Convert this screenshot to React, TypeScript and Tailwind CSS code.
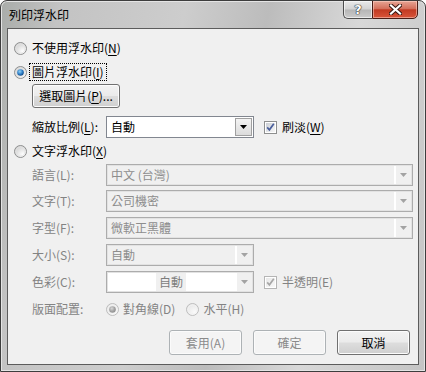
import React from "react";

function Radio({ checked = false, disabled = false }: { checked?: boolean; disabled?: boolean }) {
  const id = `r${checked ? 1 : 0}${disabled ? 1 : 0}`;
  return (
    <svg width="13" height="13" viewBox="0 0 13 13" className="shrink-0">
      <defs>
        <radialGradient id={`${id}f`} cx="0.7" cy="0.75" r="0.8">
          <stop offset="0" stopColor={disabled ? "#fbfbfb" : "#ffffff"} />
          <stop offset="1" stopColor={disabled ? "#e6e6e6" : "#cfcfcf"} />
        </radialGradient>
        <radialGradient id={`${id}d`} cx="0.4" cy="0.35" r="0.7">
          <stop offset="0" stopColor={disabled ? "#d8d8d8" : "#8fd0f6"} />
          <stop offset="0.6" stopColor={disabled ? "#a2a2a2" : "#2b7bc4"} />
          <stop offset="1" stopColor={disabled ? "#8c8c8c" : "#0c3f77"} />
        </radialGradient>
      </defs>
      <circle cx="6.5" cy="6.5" r="6" fill={`url(#${id}f)`} stroke={disabled ? "#bdbdbd" : "#8e8f8f"} />
      <circle cx="6.5" cy="6.5" r="4.6" fill="none" stroke={disabled ? "#f2f2f2" : "#e4e4e4"} strokeWidth="0.8" />
      {checked && <circle cx="6.5" cy="6.5" r="3.3" fill={`url(#${id}d)`} />}
    </svg>
  );
}

function Checkbox({ disabled = false }: { disabled?: boolean }) {
  const id = `c${disabled ? 1 : 0}`;
  return (
    <svg width="13" height="13" viewBox="0 0 13 13" className="shrink-0">
      <defs>
        <linearGradient id={id} x1="0" y1="0" x2="1" y2="1">
          <stop offset="0" stopColor={disabled ? "#e8e8e8" : "#cbcfd5"} />
          <stop offset="1" stopColor={disabled ? "#f8f8f8" : "#f7f7f7"} />
        </linearGradient>
      </defs>
      <rect x="0.5" y="0.5" width="12" height="12" fill="#ffffff" stroke={disabled ? "#b5b5b5" : "#8e8f8f"} />
      <rect x="2" y="2" width="9" height="9" fill={`url(#${id})`} />
      <path
        d="M3.2 6.4 L5.4 8.8 L9.8 2.8"
        fill="none"
        stroke={disabled ? "#a7a7a7" : "#4a5f9c"}
        strokeWidth="1.7"
      />
    </svg>
  );
}

function Arrow({ disabled = false }: { disabled?: boolean }) {
  return (
    <svg width="7" height="4" viewBox="0 0 7 4">
      <path d="M0 0 H7 L3.5 4 Z" fill={disabled ? "#a3a3a3" : "#000000"} />
    </svg>
  );
}

function U({ children }: { children: React.ReactNode }) {
  return <span className="underline underline-offset-[2px]">{children}</span>;
}

function Combo({
  value,
  wide = false,
  white = false,
  center = false,
}: {
  value: string;
  wide?: boolean;
  white?: boolean;
  center?: boolean;
}) {
  return (
    <div
      className={`${wide ? "w-[307px]" : "w-[148px]"} h-[22px] flex border border-[#acacac] shadow-[inset_0_0_0_1px_#e2e2e2] ${
        white ? "bg-white" : "bg-[#f0f0f0]"
      }`}
    >
      <div className={`flex-1 flex items-center ${center ? "justify-center" : "pl-[4px]"}`}>
        {center ? (
          <span className="bg-[#f0f0f0] text-[#7d7d7d] px-[3px] py-[3px]">{value}</span>
        ) : (
          <span className="text-[#8d8d8d]">{value}</span>
        )}
      </div>
      <div className="w-[17px] my-[1px] mr-[1px] flex items-center justify-center bg-[#f0f0f0] border-l border-l-[#ffffff] shadow-[inset_1px_0_0_#ffffff]">
        <Arrow disabled />
      </div>
    </div>
  );
}

function Btn({ label, disabled = false }: { label: React.ReactNode; disabled?: boolean }) {
  return (
    <div
      className={`w-[73px] h-[25px] rounded-[3px] border flex items-center justify-center ${
        disabled
          ? "border-[#adb2b5] bg-[#f4f4f4] text-[#8a8a8a] shadow-[inset_0_0_0_1px_#fbfbfb]"
          : "border-[#707070] bg-[linear-gradient(#f2f2f2_0%,#ebebeb_48%,#dddddd_52%,#cfcfcf_100%)] text-black shadow-[inset_0_0_0_1px_#fcfcfc]"
      }`}
    >
      {label}
    </div>
  );
}

const LBL = "w-[74px] shrink-0 text-[#838383]";

export default function App() {
  return (
    <div className="w-[426px] h-[372px] font-['Noto_Sans_CJK_TC','Noto_Sans',sans-serif] text-[12px] leading-none text-black select-none">
      <div className="w-full h-full flex flex-col rounded-t-[7px] border border-[#3d3d3d] bg-[linear-gradient(100deg,#a9aca9_0%,#c3c3c3_12%,#cdcdcd_38%,#bcbcbc_55%,#d8d8d8_74%,#c4c4c4_100%)] shadow-[inset_0_0_0_1px_#e4e4e4] overflow-hidden">
        {/* Title bar */}
        <div className="h-[27px] shrink-0 flex items-start">
          <div className="self-center pl-[8px] pt-[1px] text-[12px] text-black">列印浮水印</div>
          <div className="ml-auto mr-[7px] flex">
            <div className="w-[29px] h-[19px] -mt-[1px] flex items-center justify-center border border-[#4d4d4d] border-r-0 rounded-bl-[5px] bg-[linear-gradient(#eaeaea_0%,#d3d3d3_48%,#b6b6b6_52%,#cbcbcb_100%)] shadow-[inset_0_0_0_1px_rgba(255,255,255,0.6)]">
              <span className="font-['DejaVu_Sans',sans-serif] font-bold text-[13px] text-white [text-shadow:0_0_1px_#222,0_0_1px_#222,0_0_1px_#222] -mt-[1px]">?</span>
            </div>
            <div className="w-[46px] h-[19px] -mt-[1px] flex items-center justify-center border border-[#4a1d16] rounded-br-[5px] bg-[linear-gradient(#e7a595_0%,#d4705c_45%,#c23a22_52%,#d9553a_100%)] shadow-[inset_0_0_0_1px_rgba(255,220,210,0.5)]">
              <svg width="13" height="11" viewBox="0 0 13 11">
                <path d="M2 1.5 L11 9.5 M11 1.5 L2 9.5" stroke="#3a1a14" strokeWidth="4.2" strokeLinecap="square" />
                <path d="M2 1.5 L11 9.5 M11 1.5 L2 9.5" stroke="#ffffff" strokeWidth="2.2" strokeLinecap="square" />
              </svg>
            </div>
          </div>
        </div>

        {/* Client area */}
        <div className="mx-[6px] h-[337px] shrink-0 border border-[#5c5c5c] bg-[#f0f0f0] flex flex-col pl-[6px]">
          {/* radio 1 */}
          <div className="mt-[10px] h-[18px] flex items-center">
            <Radio />
            <span className="ml-[5px]">
              不使用浮水印(<U>N</U>)
            </span>
          </div>
          {/* radio 2 */}
          <div className="mt-[6px] h-[18px] flex items-center">
            <Radio checked />
            <span className="ml-[2px] h-[18px] flex items-center px-[2px] border border-dotted border-black">
              圖片浮水印(<U>I</U>)
            </span>
          </div>
          {/* select picture button */}
          <div className="mt-[3px] pl-[18px] flex">
            <div className="w-[88px] h-[24px] rounded-[3px] border border-[#707070] bg-[linear-gradient(#f2f2f2_0%,#ebebeb_48%,#dddddd_52%,#cfcfcf_100%)] shadow-[inset_0_0_0_1px_#fcfcfc] flex items-center justify-center">
              選取圖片(<U>P</U>)...
            </div>
          </div>
          {/* scale row */}
          <div className="mt-[8px] h-[22px] pl-[18px] flex items-center">
            <span className="w-[74px] shrink-0">
              縮放比例(<U>L</U>):
            </span>
            <div className="w-[148px] h-[22px] flex border border-[#828790] bg-white">
              <div className="flex-1 flex items-center pl-[4px]">自動</div>
              <div className="w-[17px] my-[1px] mr-[1px] flex items-center justify-center border border-[#a0a0a0] bg-[linear-gradient(#f4f4f4,#dcdcdc)]">
                <Arrow />
              </div>
            </div>
            <span className="ml-[10px]">
              <Checkbox />
            </span>
            <span className="ml-[5px]">
              刷淡(<U>W</U>)
            </span>
          </div>
          {/* radio 3 */}
          <div className="mt-[4px] h-[18px] flex items-center">
            <Radio />
            <span className="ml-[5px]">
              文字浮水印(<U>X</U>)
            </span>
          </div>
          {/* language */}
          <div className="mt-[4px] h-[22px] pl-[18px] flex items-center">
            <span className={LBL}>語言(L):</span>
            <Combo value="中文 (台灣)" wide />
          </div>
          <div className="mt-[4px] h-[22px] pl-[18px] flex items-center">
            <span className={LBL}>文字(T):</span>
            <Combo value="公司機密" wide />
          </div>
          <div className="mt-[5px] h-[22px] pl-[18px] flex items-center">
            <span className={LBL}>字型(F):</span>
            <Combo value="微軟正黑體" wide />
          </div>
          <div className="mt-[5px] h-[22px] pl-[18px] flex items-center">
            <span className={LBL}>大小(S):</span>
            <Combo value="自動" />
          </div>
          <div className="mt-[5px] h-[22px] pl-[18px] flex items-center">
            <span className={LBL}>色彩(C):</span>
            <Combo value="自動" white center />
            <span className="ml-[10px]">
              <Checkbox disabled />
            </span>
            <span className="ml-[5px] text-[#838383]">半透明(E)</span>
          </div>
          {/* layout */}
          <div className="mt-[7px] h-[18px] pl-[18px] flex items-center">
            <span className={LBL}>版面配置:</span>
            <Radio checked disabled />
            <span className="ml-[4px] text-[#838383]">對角線(D)</span>
            <span className="ml-[11px] flex">
              <Radio disabled />
            </span>
            <span className="ml-[4px] text-[#838383]">水平(H)</span>
          </div>
          {/* buttons */}
          <div className="mt-[12px] flex justify-end pr-[8px] gap-[11px]">
            <Btn label="套用(A)" disabled />
            <Btn label="確定" disabled />
            <Btn label="取消" />
          </div>
        </div>
      </div>
    </div>
  );
}
